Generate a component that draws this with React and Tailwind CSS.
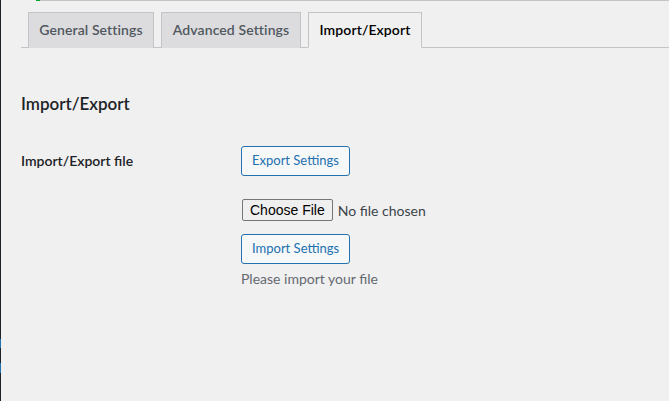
import React from 'react';

const tabs = [
    { text: 'General Settings', width: 'w-[126px]', active: false },
    { text: 'Advanced Settings', width: 'w-[140px]', active: false },
    { text: 'Import/Export', width: 'w-[114px]', active: true },
];

const App = () => {
    const font = { fontFamily: 'Lato, "Open Sans", sans-serif' };

    return (
        <div className="flex w-[669px] h-[401px] overflow-hidden bg-[#f0f0f1] text-[#1d2327]" style={font}>
            {/* Admin menu edge */}
            <div className="flex flex-col w-px shrink-0 bg-[#1d2327]">
                <div className="h-[339px]" />
                <div className="h-[9px] bg-[#2271b1]" />
                <div className="h-[15px]" />
                <div className="h-[10px] bg-[#2271b1]" />
            </div>

            <div className="flex-1 flex flex-col">
                {/* Notice bottom edge */}
                <div className="flex h-px pl-[35px]">
                    <div className="w-[4px] bg-[#00a32a]" />
                    <div className="flex-1 bg-[#c3c4c7]" />
                </div>

                {/* Tabs */}
                <nav className="flex mt-[11px] ml-[20px] border-b border-[#c3c4c7]">
                    {tabs.map((tab) => (
                        <span
                            key={tab.text}
                            className={`${tab.width} ml-[7px] -mb-px py-[5px] text-center text-[14px] tracking-[0.1px] leading-[24px] font-semibold border border-[#c3c4c7] ${
                                tab.active
                                    ? 'bg-[#f0f0f1] text-black border-b-[#f0f0f1]'
                                    : 'bg-[#dcdcde] text-[#50575e] border-b-0'
                            }`}
                        >
                            {tab.text}
                        </span>
                    ))}
                </nav>

                {/* Content */}
                <main className="pl-[20px]">
                    <h2 className="mt-[44px] text-[17px] leading-[24px] font-semibold">Import/Export</h2>

                    <div className="flex mt-[15px]">
                        <div className="w-[220px] pt-[21px] text-[14px] leading-[18px] font-semibold">
                            Import/Export file
                        </div>
                        <div className="flex flex-col items-start pt-[15px]">
                            <button className="h-[30px] px-[10px] text-[13px] text-[#2271b1] bg-[#f6f7f7] border border-[#2271b1] rounded-[3px]">
                                Export Settings
                            </button>

                            <div className="flex items-center mt-[23px] text-[14px]">
                                <span
                                    className="h-[22px] ml-px px-[7px] flex items-center bg-[#efefef] border border-[#767676] rounded-[2px] text-black"
                                    style={{ fontFamily: '"Liberation Sans", Arial, sans-serif', fontSize: '14px' }}
                                >
                                    Choose File
                                </span>
                                <span className="ml-[5px] text-[#3c434a]">No file chosen</span>
                            </div>

                            <button className="h-[30px] mt-[13px] px-[10px] text-[13px] text-[#2271b1] bg-[#f6f7f7] border border-[#2271b1] rounded-[3px]">
                                Import Settings
                            </button>

                            <p className="mt-[5px] text-[14px] leading-[20px] text-[#646970]">Please import your file</p>
                        </div>
                    </div>
                </main>
            </div>
        </div>
    );
};

export default App;
